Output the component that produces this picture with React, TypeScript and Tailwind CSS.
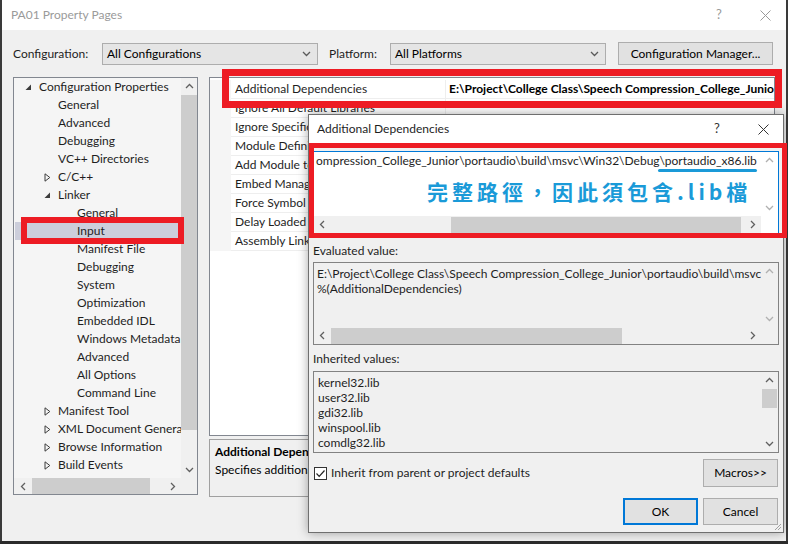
import type { ReactNode } from 'react';

type TreeItem = { label: string; level: number; arrow?: 'open' | 'closed'; selected?: boolean };

const treeItems: TreeItem[] = [
  { label: 'Configuration Properties', level: 0, arrow: 'open' },
  { label: 'General', level: 1 },
  { label: 'Advanced', level: 1 },
  { label: 'Debugging', level: 1 },
  { label: 'VC++ Directories', level: 1 },
  { label: 'C/C++', level: 1, arrow: 'closed' },
  { label: 'Linker', level: 1, arrow: 'open' },
  { label: 'General', level: 2 },
  { label: 'Input', level: 2, selected: true },
  { label: 'Manifest File', level: 2 },
  { label: 'Debugging', level: 2 },
  { label: 'System', level: 2 },
  { label: 'Optimization', level: 2 },
  { label: 'Embedded IDL', level: 2 },
  { label: 'Windows Metadata', level: 2 },
  { label: 'Advanced', level: 2 },
  { label: 'All Options', level: 2 },
  { label: 'Command Line', level: 2 },
  { label: 'Manifest Tool', level: 1, arrow: 'closed' },
  { label: 'XML Document Generator', level: 1, arrow: 'closed' },
  { label: 'Browse Information', level: 1, arrow: 'closed' },
  { label: 'Build Events', level: 1, arrow: 'closed' },
];

const gridRows = [
  'Additional Dependencies',
  'Ignore All Default Libraries',
  'Ignore Specific Default Libraries',
  'Module Definition File',
  'Add Module to Assembly',
  'Embed Managed Resource File',
  'Force Symbol References',
  'Delay Loaded Dlls',
  'Assembly Link Resource',
];

const inherited = ['kernel32.lib', 'user32.lib', 'gdi32.lib', 'winspool.lib', 'comdlg32.lib'];

/** Petite fleche de barre de defilement */
function Chevron({ dir, color = '#606060' }: { dir: 'up' | 'down' | 'left' | 'right'; color?: string }) {
  const pts = {
    up: '1,5 4.5,1.5 8,5',
    down: '1,2 4.5,5.5 8,2',
    left: '5,1 1.5,4.5 5,8',
    right: '2,1 5.5,4.5 2,8',
  }[dir];
  const vertical = dir === 'up' || dir === 'down';
  return (
    <svg width={vertical ? 9 : 7} height={vertical ? 7 : 9} viewBox={vertical ? '0 0 9 7' : '0 0 7 9'}>
      <polyline points={pts} fill="none" stroke={color} strokeWidth="1.3" />
    </svg>
  );
}

function ComboBox({ text, width }: { text: string; width: string }) {
  return (
    <div className={`${width} h-[22px] flex items-center justify-between bg-[#e5e5e5] border border-[#adadad] pl-[4px] pr-[6px]`}>
      <span>{text}</span>
      <Chevron dir="down" color="#5a5a5a" />
    </div>
  );
}

function Button({ children, className = '' }: { children: ReactNode; className?: string }) {
  return (
    <div className={`flex items-center justify-center bg-[#e1e1e1] border border-[#adadad] ${className}`}>
      {children}
    </div>
  );
}

/** Boutons ? et X d'une barre de titre */
function TitleButtons({ color }: { color: string }) {
  return (
    <>
      <span className="w-[20px] text-center text-[13px]" style={{ color }}>?</span>
      <span className="w-[40px] ml-[16px] flex justify-center">
        <svg width="11" height="11" viewBox="0 0 11 11">
          <path d="M0.5 0.5 L10.5 10.5 M10.5 0.5 L0.5 10.5" stroke={color} strokeWidth="1" />
        </svg>
      </span>
    </>
  );
}

function TreeArrow({ kind }: { kind?: 'open' | 'closed' }) {
  if (kind === 'open') {
    return (
      <svg width="7" height="7" viewBox="0 0 7 7">
        <polygon points="6,0.5 6,6 0.5,6" fill="#3c3c3c" />
      </svg>
    );
  }
  if (kind === 'closed') {
    return (
      <svg width="7" height="9" viewBox="0 0 7 9">
        <polygon points="1,0.8 5.8,4.5 1,8.2" fill="none" stroke="#3c3c3c" strokeWidth="1" />
      </svg>
    );
  }
  return null;
}

function TreePanel() {
  return (
    <div className="w-[185px] h-[418px] border border-[#828790] bg-[#f5f5f5] flex flex-col">
      <div className="flex flex-1 min-h-0">
        <div className="flex-1 overflow-hidden">
          {treeItems.map((item, i) => (
            <div
              key={i}
              className={`h-[18px] flex items-center whitespace-nowrap ${item.selected ? 'bg-[#cccedb] ml-[1px]' : ''}`}
              style={{ paddingLeft: item.level * 19 + (item.selected ? 9 : 10) }}
            >
              <span className="w-[15px] shrink-0 flex items-center pl-[1px]">
                <TreeArrow kind={item.arrow} />
              </span>
              <span className="text-[#1e1e1e]">{item.label}</span>
            </div>
          ))}
        </div>
        <div className="w-[16px] bg-[#f0f0f0] flex flex-col items-center">
          <div className="h-[17px] flex items-center justify-center">
            <Chevron dir="up" />
          </div>
          <div className="w-full h-[335px] bg-[#cdcdcd]" />
          <div className="flex-1" />
          <div className="h-[17px] flex items-center justify-center">
            <Chevron dir="down" />
          </div>
        </div>
      </div>
      <div className="h-[16px] flex bg-[#f0f0f0]">
        <div className="flex-1 flex items-center">
          <div className="w-[18px] flex justify-center">
            <Chevron dir="left" />
          </div>
          <div className="w-[118px] h-full bg-[#cdcdcd]" />
          <div className="flex-1" />
          <div className="w-[18px] flex justify-center">
            <Chevron dir="right" />
          </div>
        </div>
        <div className="w-[16px]" />
      </div>
    </div>
  );
}

function PropertyGrid() {
  return (
    <div className="h-[359px] border border-[#828790] bg-white pt-[2px] overflow-hidden">
      {gridRows.map((row, i) => (
        <div key={row} className="h-[19px] flex whitespace-nowrap">
          <div className="w-[21px] shrink-0 bg-[#f5f5f5]" />
          <div className="w-[214px] shrink-0 flex items-center pl-[4px] border-b border-[#eeeeee] overflow-hidden text-[#1e1e1e]">
            {row}
          </div>
          <div className="flex-1 flex items-center pl-[3px] border-l border-b border-[#eeeeee] overflow-hidden font-bold">
            {i === 0 ? 'E:\\Project\\College Class\\Speech Compression_College_Junior\\portaudio\\build\\msvc\\Win32\\Debug\\portaudio_x86.lib;%(AdditionalDependencies)' : ''}
          </div>
        </div>
      ))}
    </div>
  );
}

function VScroll({ thumb, dim }: { thumb?: boolean; dim?: boolean }) {
  const c = dim ? '#b0b0b0' : '#606060';
  return (
    <div className="w-[17px] flex flex-col items-center">
      <div className="h-[17px] flex items-center justify-center">
        <Chevron dir="up" color={c} />
      </div>
      {thumb && <div className="w-[15px] h-[19px] bg-[#cdcdcd]" />}
      <div className="flex-1" />
      <div className="h-[17px] flex items-center justify-center">
        <Chevron dir="down" color={c} />
      </div>
    </div>
  );
}

function HScroll({ thumbLeft, thumbWidth }: { thumbLeft: string; thumbWidth: string }) {
  return (
    <div className="h-[17px] flex items-center bg-[#f0f0f0]">
      <div className="w-[17px] flex justify-center">
        <Chevron dir="left" />
      </div>
      <div className={`${thumbLeft}`} />
      <div className={`${thumbWidth} h-[16px] bg-[#cdcdcd]`} />
      <div className="flex-1" />
      <div className="w-[17px] flex justify-center">
        <Chevron dir="right" />
      </div>
    </div>
  );
}

function DependenciesDialog() {
  return (
    <div className="absolute left-[308px] top-[114px] w-[476px] h-[419px] bg-[#f0f0f0] border border-[#6f6f6f] shadow-[0_0_10px_rgba(0,0,0,0.35)] flex flex-col">
      {/* Barre de titre */}
      <div className="h-[28px] bg-white flex items-center pl-[8px] shrink-0">
        <span className="flex-1 text-[#1e1e1e]">Additional Dependencies</span>
        <TitleButtons color="#333333" />
      </div>

      <div className="px-[4px] flex flex-col">
        {/* Zone de saisie */}
        <div className="mt-[8px] h-[83px] bg-white border border-[#0078d7] flex flex-col">
          <div className="flex flex-1 min-h-0">
            <div className="flex-1 overflow-hidden whitespace-nowrap pl-[2px] pt-[1px] leading-[16px] text-[#1e1e1e]">
              ompression_College_Junior\portaudio\build\msvc\Win32\Debug\portaudio_x86.lib
            </div>
            <VScroll dim />
          </div>
          <div className="flex">
            <div className="flex-1">
              <HScroll thumbLeft="w-[120px]" thumbWidth="w-[290px]" />
            </div>
            <div className="w-[17px]" />
          </div>
        </div>

        <div className="mt-[9px] h-[16px] leading-[16px] text-[#1e1e1e]">Evaluated value:</div>
        <div className="mt-[3px] h-[83px] border border-[#828282] flex flex-col">
          <div className="flex flex-1 min-h-0">
            <div className="flex-1 overflow-hidden whitespace-nowrap pl-[3px] pt-[3px] leading-[15px] text-[#1e1e1e]">
              <div>E:\Project\College Class\Speech Compression_College_Junior\portaudio\build\msvc\Win32\Debug\portaudio_x86.lib</div>
              <div>%(AdditionalDependencies)</div>
            </div>
            <VScroll dim />
          </div>
          <div className="flex">
            <div className="flex-1">
              <HScroll thumbLeft="w-[0px]" thumbWidth="w-[291px]" />
            </div>
            <div className="w-[17px]" />
          </div>
        </div>

        <div className="mt-[6px] h-[16px] leading-[16px] text-[#1e1e1e]">Inherited values:</div>
        <div className="mt-[4px] h-[82px] border border-[#828282] flex">
          <div className="flex-1 pl-[4px] pt-[3px] leading-[15px] text-[#1e1e1e]">
            {inherited.map((lib) => (
              <div key={lib}>{lib}</div>
            ))}
          </div>
          <VScroll thumb />
        </div>

        {/* Case a cocher et macros */}
        <div className="mt-[6px] flex items-start">
          <div className="flex-1 flex items-center pl-[1px] pt-[5px]">
            <div className="w-[13px] h-[13px] border border-[#333] bg-white flex items-center justify-center">
              <svg width="11" height="11" viewBox="0 0 11 11">
                <polyline points="1.5,5.5 4.2,8.3 9.5,2.5" fill="none" stroke="#222" strokeWidth="1.2" />
              </svg>
            </div>
            <span className="ml-[4px] text-[#1e1e1e]">Inherit from parent or project defaults</span>
          </div>
          <Button className="w-[75px] h-[28px] mr-[1px]">Macros&gt;&gt;</Button>
        </div>

        <div className="mt-[11px] flex justify-end gap-[5px] pr-[1px]">
          <div className="w-[75px] h-[27px] flex items-center justify-center bg-[#e1e1e1] border-2 border-[#0078d7]">OK</div>
          <Button className="w-[75px] h-[27px]">Cancel</Button>
        </div>
      </div>

      {/* Poignee de redimensionnement */}
      <svg className="absolute right-[1px] bottom-[1px]" width="10" height="10" viewBox="0 0 10 10">
        <path d="M9 3 L3 9 M9 6 L6 9" stroke="#a0a0a0" strokeWidth="1" />
      </svg>
    </div>
  );
}

export default function App() {
  return (
    <div className="relative w-[788px] h-[544px] overflow-hidden bg-[#2b2b2b] font-[Lato,'Noto_Sans',sans-serif] text-[12px] text-black">
      <div className="w-[788px] h-[541px] bg-[#f0f0f0] border-l-2 border-r-2 border-[#3a3a3a] flex flex-col">
        {/* Barre de titre de la fenetre */}
        <div className="h-[30px] bg-white flex items-center pl-[9px] pr-[1px] shrink-0">
          <span className="flex-1 text-[12px] text-[#9a9a9a]">PA01 Property Pages</span>
          <TitleButtons color="#9a9a9a" />
        </div>

        <div className="pl-[11px] pr-[11px] pt-[12px] flex flex-col">
          <div className="h-[23px] flex items-center">
            <span className="w-[89px] text-[#1e1e1e]">Configuration:</span>
            <ComboBox text="All Configurations" width="w-[216px]" />
            <span className="ml-[11px] w-[61px] text-[#1e1e1e]">Platform:</span>
            <ComboBox text="All Platforms" width="w-[216px]" />
            <div className="flex-1" />
            <Button className="w-[155px] h-[23px] mr-[2px]">Configuration Manager...</Button>
          </div>

          <div className="mt-[12px] flex gap-[11px]">
            <TreePanel />
            <div className="flex-1 flex flex-col gap-[3px] min-w-0">
              <PropertyGrid />
              <div className="h-[58px] border border-[#a0a0a0] px-[5px] pt-[3px] leading-[18px] whitespace-nowrap overflow-hidden">
                <div className="font-bold">Additional Dependencies</div>
                <div>Specifies additional items to add to the link command line. [i.e. kernel32.lib]</div>
              </div>
            </div>
          </div>
        </div>
      </div>

      <DependenciesDialog />

      {/* Annotations rouges et bleues */}
      <div className="absolute left-[222px] top-[69px] w-[560px] h-[39px] border-[7px] border-[#ed1c24]" />
      <div className="absolute left-[21px] top-[217px] w-[163px] h-[27px] border-[6px] border-[#ed1c24]" />
      <div className="absolute left-[309px] top-[143px] w-[478px] h-[95px] border-[5px] border-[#ed1c24]" />
      <div className="absolute left-[658px] top-[169px] w-[99px] h-[3px] rounded-full bg-[#1a9ad8]" />
      <div className="absolute left-[427px] top-[177px] font-['Noto_Sans_CJK_TC',sans-serif] font-bold text-[21px] leading-[28px] tracking-[4px] text-[#1a9ad8] whitespace-nowrap">
        完整路徑，因此須包含.lib檔
      </div>
    </div>
  );
}
